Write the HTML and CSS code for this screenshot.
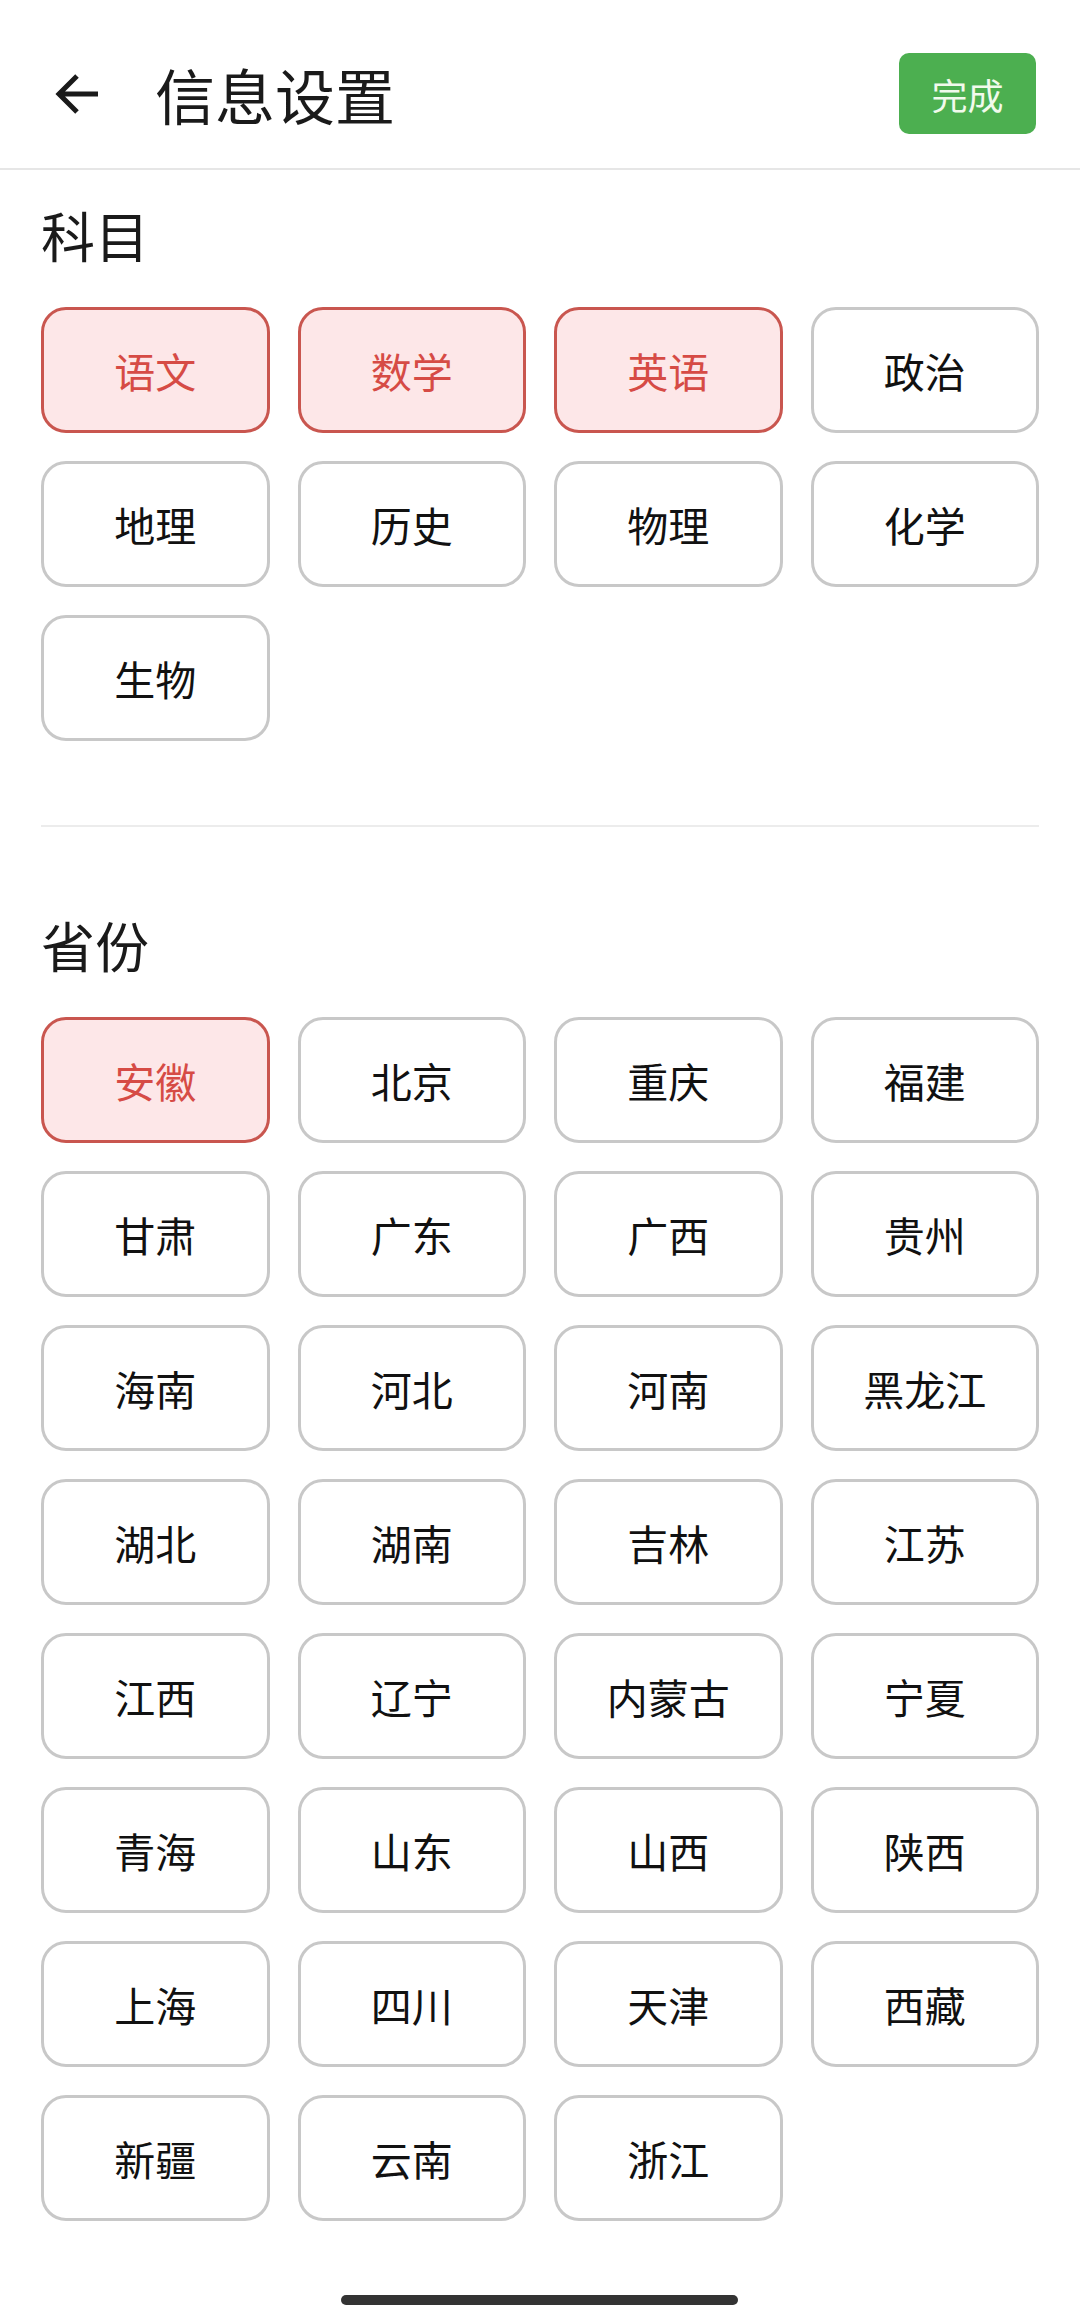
FILE: index.html
```html
<!DOCTYPE html>
<html lang="zh-CN">
<head>
<meta charset="UTF-8">
<meta name="viewport" content="width=device-width, initial-scale=1.0">
<title>信息设置</title>
<link rel="stylesheet" href="styles.css">
</head>
<body>
<header class="topbar">
    <button class="back-btn" type="button" aria-label="返回">
        <svg width="44" height="44" viewBox="0 0 44 44"><path d="M43 22H3M22 4L4 22l18 18" fill="none" stroke="#1a1a1a" stroke-width="5"/></svg>
    </button>
    <h1 class="page-title">信息设置</h1>
    <button class="done-btn" type="button">完成</button>
</header>

<main class="content">
    <section class="group">
        <h2 class="group-title">科目</h2>
        <div class="chip-grid">
            <div class="chip selected">语文</div>
            <div class="chip selected">数学</div>
            <div class="chip selected">英语</div>
            <div class="chip">政治</div>
            <div class="chip">地理</div>
            <div class="chip">历史</div>
            <div class="chip">物理</div>
            <div class="chip">化学</div>
            <div class="chip">生物</div>
        </div>
    </section>

    <hr class="divider">

    <section class="group">
        <h2 class="group-title">省份</h2>
        <div class="chip-grid">
            <div class="chip selected">安徽</div>
            <div class="chip">北京</div>
            <div class="chip">重庆</div>
            <div class="chip">福建</div>
            <div class="chip">甘肃</div>
            <div class="chip">广东</div>
            <div class="chip">广西</div>
            <div class="chip">贵州</div>
            <div class="chip">海南</div>
            <div class="chip">河北</div>
            <div class="chip">河南</div>
            <div class="chip">黑龙江</div>
            <div class="chip">湖北</div>
            <div class="chip">湖南</div>
            <div class="chip">吉林</div>
            <div class="chip">江苏</div>
            <div class="chip">江西</div>
            <div class="chip">辽宁</div>
            <div class="chip">内蒙古</div>
            <div class="chip">宁夏</div>
            <div class="chip">青海</div>
            <div class="chip">山东</div>
            <div class="chip">山西</div>
            <div class="chip">陕西</div>
            <div class="chip">上海</div>
            <div class="chip">四川</div>
            <div class="chip">天津</div>
            <div class="chip">西藏</div>
            <div class="chip">新疆</div>
            <div class="chip">云南</div>
            <div class="chip">浙江</div>
        </div>
    </section>
</main>

<div class="home-indicator"></div>
</body>
</html>
```

FILE: styles.css
```css
/* Page basics */
html, body {
    margin: 0;
    padding: 0;
    background: #fff;
    font-family: "Noto Sans CJK SC", "Noto Sans", sans-serif;
    color: #1a1a1a;
}
body {
    min-height: 2322px;
    position: relative;
}

/* Top bar */
.topbar {
    box-sizing: border-box;
    height: 170px;
    padding: 19px 44px 0 55px;
    display: flex;
    align-items: center;
    border-bottom: 2px solid #e6e6e6;
}
.back-btn {
    width: 44px;
    height: 44px;
    padding: 0;
    border: none;
    background: none;
    display: flex;
}
.page-title {
    margin: 0 0 0 56px;
    font-size: 60px;
    font-weight: 400;
    line-height: 1;
}
.done-btn {
    margin-left: auto;
    width: 137px;
    height: 81px;
    border: none;
    border-radius: 10px;
    background: #4caf50;
    color: #f1faec;
    font-family: inherit;
    font-size: 36px;
    padding: 0;
}

/* Option groups */
.group {
    padding: 33px 41px 0;
}
.group-title {
    margin: 0 0 40px;
    font-size: 54px;
    font-weight: 400;
    line-height: 64px;
}
.chip-grid {
    display: grid;
    grid-template-columns: repeat(4, 1fr);
    gap: 28px;
}
.chip {
    box-sizing: border-box;
    height: 126px;
    border: 3px solid #c8c8c8;
    border-radius: 25px;
    display: flex;
    align-items: center;
    justify-content: center;
    font-size: 41px;
    color: #111;
}
.chip.selected {
    background: #fde7e8;
    border-color: #c9564f;
    color: #d64b45;
}
.divider {
    margin: 84px 41px 53px;
    border: none;
    border-top: 2px solid #ececec;
}

/* system gesture bar */
.home-indicator {
    position: absolute;
    left: 341px;
    bottom: 17px;
    width: 397px;
    height: 10px;
    border-radius: 5px;
    background: #333;
}
```
